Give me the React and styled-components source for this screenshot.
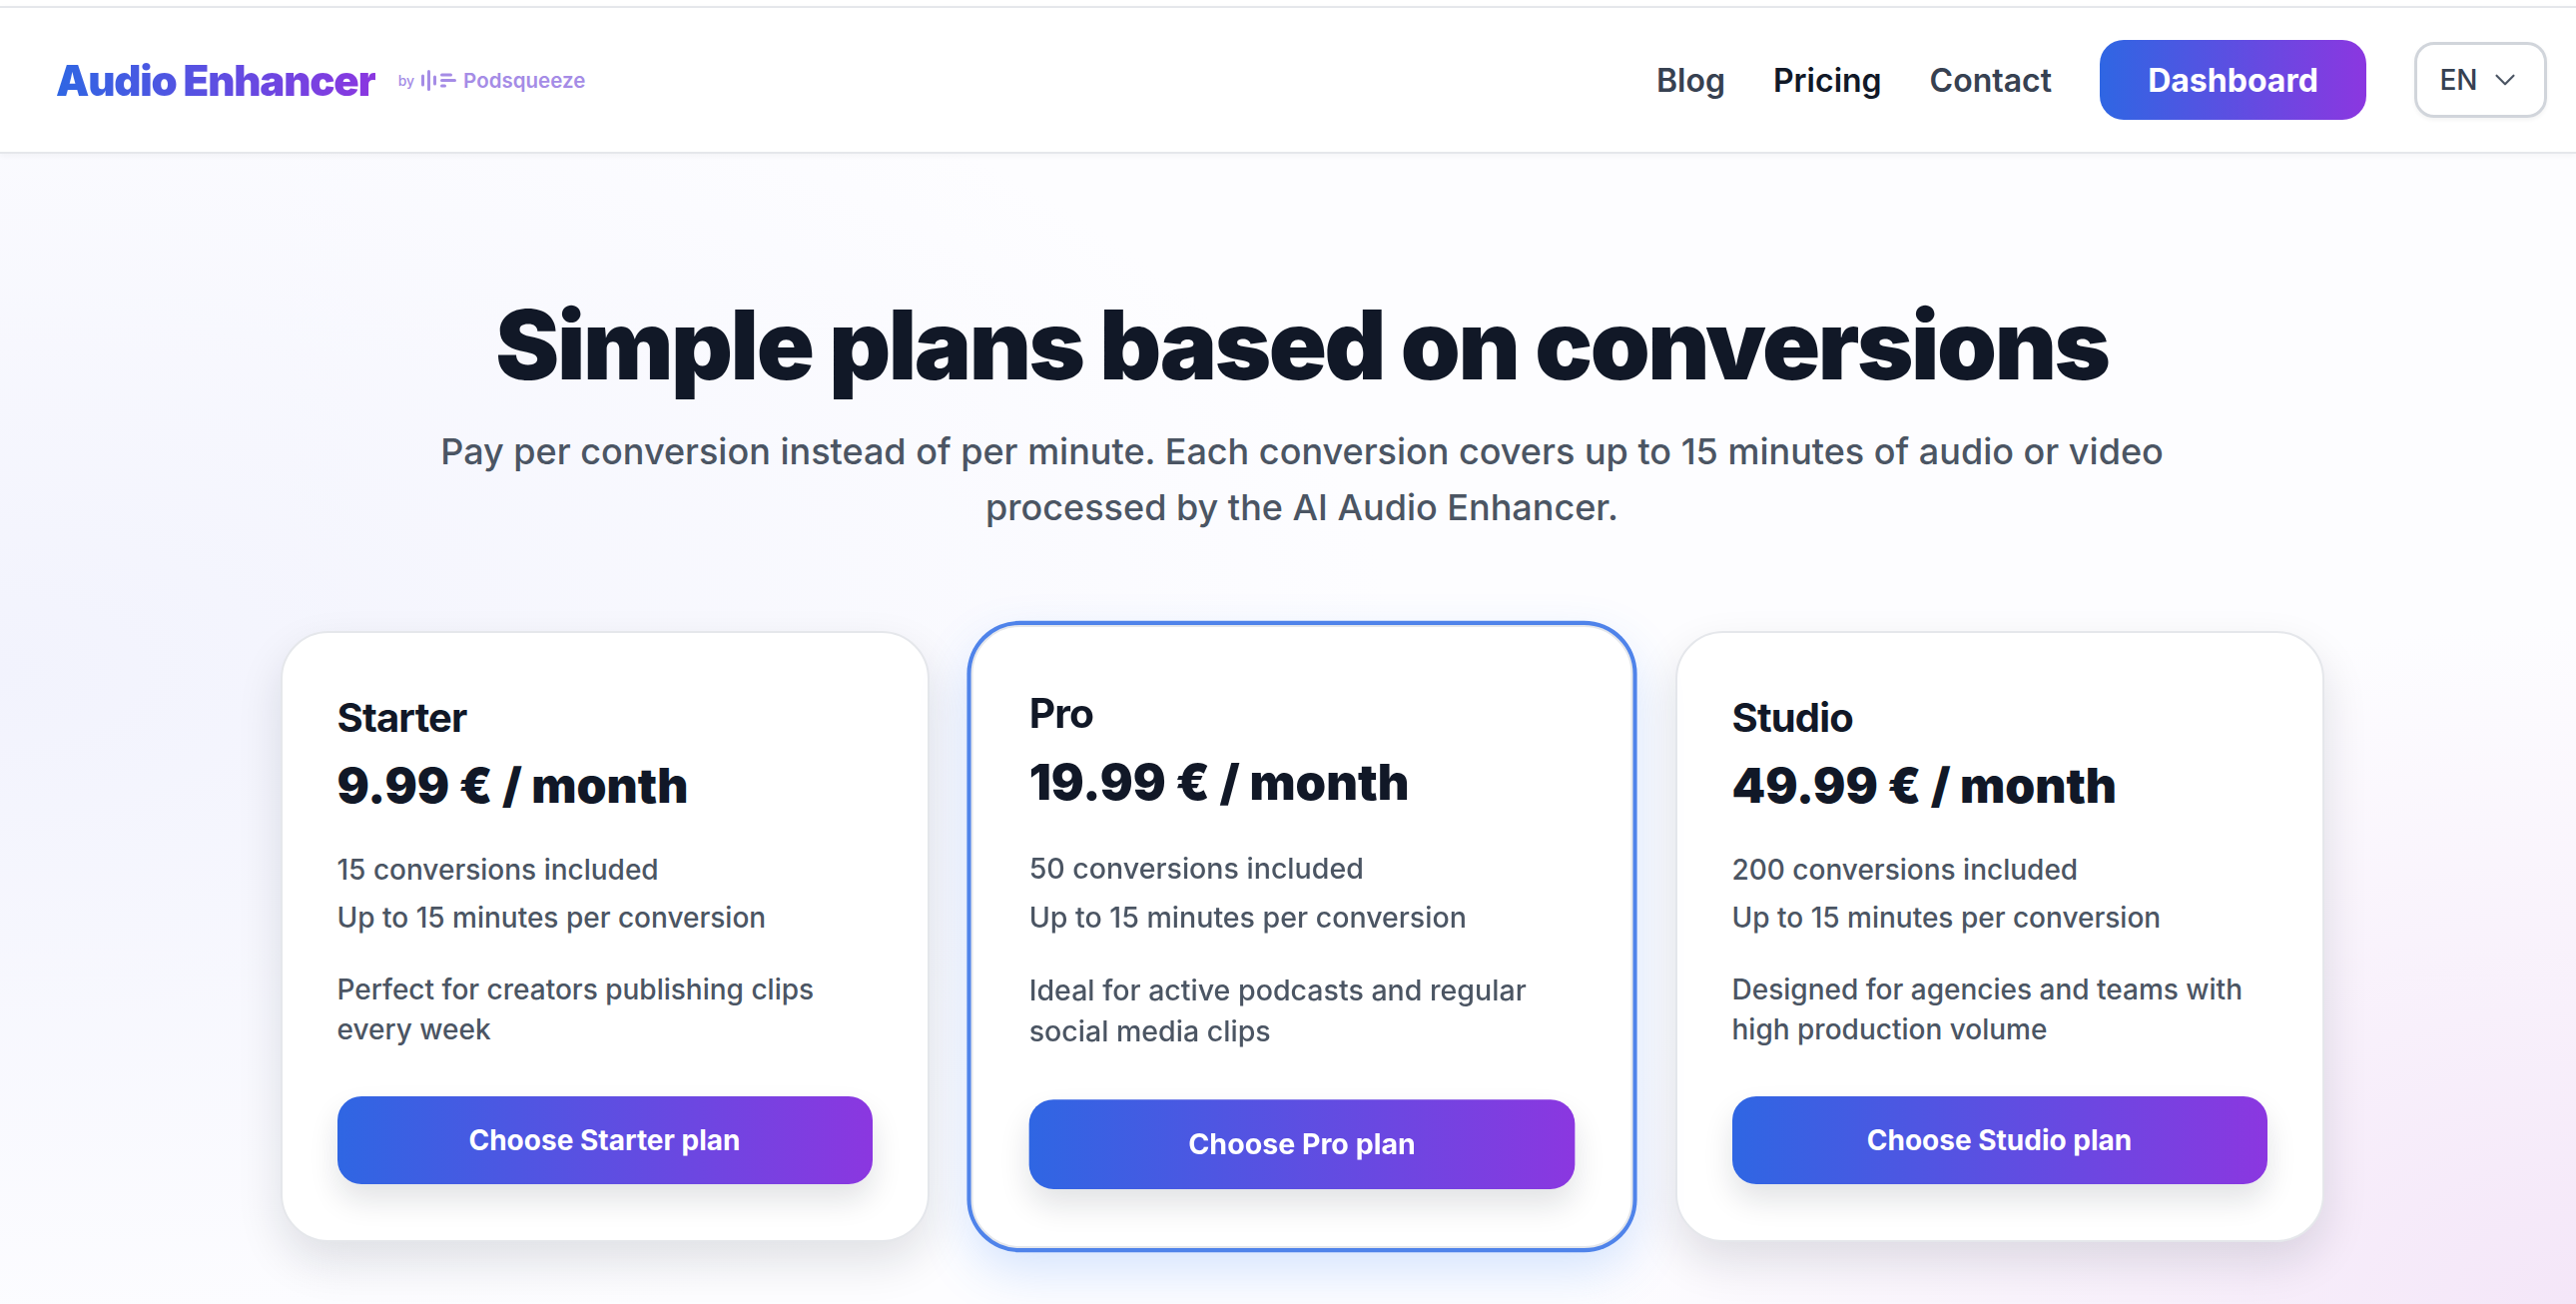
import React from 'react';
import styled, { createGlobalStyle } from 'styled-components';
import { ChevronDown } from 'lucide-react';

const GRADIENT = 'linear-gradient(90deg, #2f66e3 0%, #8b37e0 100%)';

const plans = [
  {
    name: 'Starter',
    price: '9.99 € / month',
    conversions: '15 conversions included',
    blurb: 'Perfect for creators publishing clips every week',
  },
  {
    name: 'Pro',
    price: '19.99 € / month',
    conversions: '50 conversions included',
    blurb: 'Ideal for active podcasts and regular social media clips',
    featured: true,
  },
  {
    name: 'Studio',
    price: '49.99 € / month',
    conversions: '200 conversions included',
    blurb: 'Designed for agencies and teams with high production volume',
  },
];

const GlobalStyle = createGlobalStyle`
  html, body {
    margin: 0;
    height: 100%;
    overflow: hidden;
    background: #fff;
    font-family: Inter, "Liberation Sans", sans-serif;
  }
  * { box-sizing: border-box; }
`;

const Page = styled.div`
  height: 1306px;
  padding-top: 6px;
  display: flex;
  flex-direction: column;
  overflow: hidden;
`;

const Header = styled.header`
  height: 148px;
  flex: none;
  display: flex;
  align-items: center;
  justify-content: space-between;
  padding: 0 29px 0 56px;
  background: #fff;
  border-top: 2px solid #e5e7eb;
  border-bottom: 2px solid #e5e7eb;
  box-shadow: 0 2px 6px rgba(0, 0, 0, 0.04);
  position: relative;
  z-index: 1;
`;

const Brand = styled.div`
  display: flex;
  align-items: center;
`;

const Logo = styled.span`
  font-size: 42px;
  font-weight: 900;
  letter-spacing: -1.2px;
  background: ${GRADIENT};
  -webkit-background-clip: text;
  background-clip: text;
  color: transparent;
`;

const ByLine = styled.div`
  display: flex;
  align-items: center;
  margin-left: 23px;
  color: #a58ce6;
  font-size: 20.5px;
  font-weight: 600;
`;

const By = styled.span`
  font-size: 14px;
  font-weight: 500;
  margin-right: 7px;
`;

const ByName = styled.span`
  margin-left: 6px;
`;

const Nav = styled.nav`
  display: flex;
  align-items: center;
`;

const NavLink = styled.a`
  font-size: 32px;
  font-weight: 600;
  color: ${(p) => (p.$active ? '#111827' : '#374151')};
  margin-right: 48px;
`;

const DashboardButton = styled.button`
  width: 267px;
  height: 80px;
  border: 0;
  border-radius: 24px;
  background: ${GRADIENT};
  color: #fff;
  font: 700 32px Inter, sans-serif;
`;

const LangSelect = styled.div`
  width: 133px;
  height: 76px;
  margin-left: 48px;
  display: flex;
  align-items: center;
  justify-content: center;
  gap: 10px;
  border: 3px solid #d1d5db;
  border-radius: 20px;
  font-size: 28px;
  font-weight: 500;
  color: #374151;
  box-shadow: 0 2px 4px rgba(0, 0, 0, 0.05);
`;

const Main = styled.main`
  flex: 1;
  padding: 133px 252.5px 0 280.5px;
  background:
    radial-gradient(1000px 680px at 100% 100%, #f4e6f8 0%, rgba(244, 230, 248, 0) 100%),
    radial-gradient(1400px 720px at 0% 45%, #f2f3fd 0%, rgba(242, 243, 253, 0) 100%),
    #fdfdff;
`;

const Title = styled.h1`
  margin: 0;
  text-align: center;
  font-size: 96px;
  line-height: 116px;
  font-weight: 900;
  letter-spacing: -2.4px;
  color: #111827;
`;

const Subtitle = styled.p`
  margin: 21px auto 0;
  max-width: 1800px;
  text-align: center;
  font-size: 36px;
  line-height: 56px;
  font-weight: 500;
  color: #4b5563;
`;

const PlanGrid = styled.div`
  margin-top: 96px;
  display: grid;
  grid-template-columns: repeat(3, 650px);
  column-gap: 48.5px;
`;

const PlanCard = styled.article`
  height: 612px;
  padding: 61px 55px 0;
  display: flex;
  flex-direction: column;
  background: #fff;
  border: 2px solid #e5e7eb;
  border-radius: 48px;
  box-shadow: 0 20px 45px rgba(17, 24, 39, 0.12);
  ${(p) =>
    p.$featured &&
    `
    transform: scale(1.02);
    box-shadow: 0 0 0 4px #4f83ea, 0 20px 50px rgba(59, 130, 246, 0.22);
  `}
`;

const PlanName = styled.h2`
  margin: 0;
  font-size: 40px;
  line-height: 48px;
  font-weight: 700;
  letter-spacing: -0.8px;
  color: #111827;
`;

const Price = styled.div`
  margin-top: 16px;
  font-size: 48px;
  line-height: 56px;
  font-weight: 900;
  color: #111827;
`;

const Features = styled.div`
  margin-top: 32px;
  font-size: 28px;
  line-height: 48px;
  font-weight: 500;
  color: #4b5563;
`;

const Blurb = styled.p`
  margin: 28px 0 0;
  font-size: 28px;
  line-height: 40px;
  font-weight: 500;
  color: #4b5563;
`;

const ChooseButton = styled.button`
  margin-top: auto;
  margin-bottom: 56px;
  height: 88px;
  flex: none;
  border: 0;
  border-radius: 24px;
  background: ${GRADIENT};
  color: #fff;
  font: 700 28px Inter, sans-serif;
  box-shadow: 0 16px 30px rgba(17, 24, 39, 0.12);
`;

const PodsqueezeIcon = () => (
  <svg width="36" height="21" viewBox="0 0 36 21" fill="#a58ce6">
    <rect x="0" y="4.5" width="3" height="12" rx="1.5" />
    <rect x="6" y="0" width="3" height="21" rx="1.5" />
    <rect x="12" y="5.5" width="3" height="10" rx="1.5" />
    <rect x="19" y="3.5" width="12" height="3" rx="1.5" />
    <rect x="19" y="9" width="16" height="3" rx="1.5" />
    <rect x="19" y="14.5" width="6" height="3" rx="1.5" />
  </svg>
);

export default function App() {
  return (
    <>
      <GlobalStyle />
      <Page>
        <Header>
          <Brand>
            <Logo>Audio Enhancer</Logo>
            <ByLine>
              <By>by</By>
              <PodsqueezeIcon />
              <ByName>Podsqueeze</ByName>
            </ByLine>
          </Brand>
          <Nav>
            <NavLink>Blog</NavLink>
            <NavLink $active>Pricing</NavLink>
            <NavLink>Contact</NavLink>
            <DashboardButton>Dashboard</DashboardButton>
            <LangSelect>
              EN
              <ChevronDown size={34} strokeWidth={1.5} color="#4b5563" />
            </LangSelect>
          </Nav>
        </Header>
        <Main>
          <Title>Simple plans based on conversions</Title>
          <Subtitle>
            Pay per conversion instead of per minute. Each conversion covers up to 15 minutes of audio or video processed by the AI Audio Enhancer.
          </Subtitle>
          <PlanGrid>
            {plans.map((plan) => (
              <PlanCard key={plan.name} $featured={plan.featured}>
                <PlanName>{plan.name}</PlanName>
                <Price>{plan.price}</Price>
                <Features>
                  <div>{plan.conversions}</div>
                  <div>Up to 15 minutes per conversion</div>
                </Features>
                <Blurb>{plan.blurb}</Blurb>
                <ChooseButton>Choose {plan.name} plan</ChooseButton>
              </PlanCard>
            ))}
          </PlanGrid>
        </Main>
      </Page>
    </>
  );
}
